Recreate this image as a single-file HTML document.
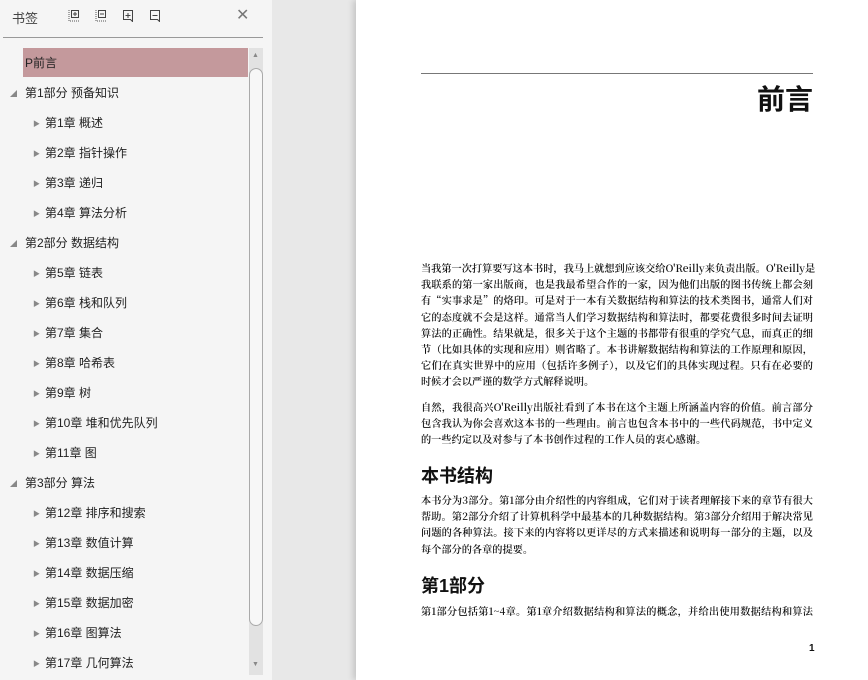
<!DOCTYPE html>
<html><head><meta charset="utf-8"><style>
*{margin:0;padding:0;box-sizing:border-box}
body{width:868px;height:680px;overflow:hidden;background:#e8e8e8;font-family:"Liberation Sans","Noto Sans CJK SC",sans-serif;position:relative}
#side{position:absolute;left:0;top:0;width:272px;height:680px;background:#f5f5f5}
.t{position:absolute;font-size:13px;color:#333}
.ic{position:absolute;top:9px;width:12px;height:13px}
.row{position:absolute;font-size:12px;color:#222;line-height:16px;white-space:nowrap}
.arr{position:absolute;font-size:7px;color:#888}
#page{position:absolute;left:356px;top:0;width:512px;height:680px;background:#fff;box-shadow:-3px 0 6px rgba(0,0,0,.15)}
.p{position:absolute;left:65px;width:392px;font-family:"Noto Serif CJK SC","Liberation Serif",serif;font-size:10.2px;font-weight:600;color:#111;line-height:16.2px;text-align:justify;text-align-last:justify;white-space:nowrap}
.l{display:block;height:16.2px;overflow:visible}
.h{position:absolute;left:65px;font-weight:bold;font-size:18px;color:#111}
</style></head><body>
<div id="side">
<div class="t" style="left:12px;top:8px;color:#444">书签</div>
<svg class="ic" style="left:68px" viewBox="0 0 12 13"><path d="M1 1v11h10" stroke="#555" stroke-dasharray="1 1" fill="none"/><rect x="3.5" y="1.5" width="7" height="7" fill="none" stroke="#444"/><path d="M7 3v4M5 5h4" stroke="#444"/></svg>
<svg class="ic" style="left:95px" viewBox="0 0 12 13"><path d="M1 1v11h10" stroke="#555" stroke-dasharray="1 1" fill="none"/><rect x="3.5" y="1.5" width="7" height="7" fill="none" stroke="#444"/><path d="M5 5h4" stroke="#444"/></svg>
<svg class="ic" style="left:122px" viewBox="0 0 12 13"><path d="M1.5 1.5h9v11l-2-2h-7z" fill="none" stroke="#444"/><path d="M6 4v5M3.5 6.5h5" stroke="#444"/></svg>
<svg class="ic" style="left:149px" viewBox="0 0 12 13"><path d="M1.5 1.5h9v11l-2-2h-7z" fill="none" stroke="#444"/><path d="M3.5 6.5h5" stroke="#444"/></svg>
<div class="t" style="left:236px;top:5px;font-size:16px;color:#777">✕</div>
<div style="position:absolute;left:3px;top:37px;width:260px;height:1px;background:#999"></div>
<div style="position:absolute;left:23px;top:48px;width:225px;height:29px;background:#c4999c"></div>
<div class="row" style="left:25px;top:55px">P前言</div>
<div style="position:absolute;left:249px;top:48px;width:14px;height:627px;background:#e2e2e2"></div>
<div style="position:absolute;left:249px;top:68px;width:14px;height:558px;background:#f7f7f7;border:1px solid #aaa;border-radius:7px"></div>
<div class="arr" style="left:252px;top:52px">▲</div>
<div class="arr" style="left:252px;top:661px">▼</div>
<div class="arr" style="left:10px;top:89px">◢</div><div class="row" style="left:25px;top:85px">第1部分 预备知识</div>
<div class="arr" style="left:33px;top:119px">▶</div><div class="row" style="left:45px;top:115px">第1章 概述</div>
<div class="arr" style="left:33px;top:149px">▶</div><div class="row" style="left:45px;top:145px">第2章 指针操作</div>
<div class="arr" style="left:33px;top:179px">▶</div><div class="row" style="left:45px;top:175px">第3章 递归</div>
<div class="arr" style="left:33px;top:209px">▶</div><div class="row" style="left:45px;top:205px">第4章 算法分析</div>
<div class="arr" style="left:10px;top:239px">◢</div><div class="row" style="left:25px;top:235px">第2部分 数据结构</div>
<div class="arr" style="left:33px;top:269px">▶</div><div class="row" style="left:45px;top:265px">第5章 链表</div>
<div class="arr" style="left:33px;top:299px">▶</div><div class="row" style="left:45px;top:295px">第6章 栈和队列</div>
<div class="arr" style="left:33px;top:329px">▶</div><div class="row" style="left:45px;top:325px">第7章 集合</div>
<div class="arr" style="left:33px;top:359px">▶</div><div class="row" style="left:45px;top:355px">第8章 哈希表</div>
<div class="arr" style="left:33px;top:389px">▶</div><div class="row" style="left:45px;top:385px">第9章 树</div>
<div class="arr" style="left:33px;top:419px">▶</div><div class="row" style="left:45px;top:415px">第10章 堆和优先队列</div>
<div class="arr" style="left:33px;top:449px">▶</div><div class="row" style="left:45px;top:445px">第11章 图</div>
<div class="arr" style="left:10px;top:479px">◢</div><div class="row" style="left:25px;top:475px">第3部分 算法</div>
<div class="arr" style="left:33px;top:509px">▶</div><div class="row" style="left:45px;top:505px">第12章 排序和搜索</div>
<div class="arr" style="left:33px;top:539px">▶</div><div class="row" style="left:45px;top:535px">第13章 数值计算</div>
<div class="arr" style="left:33px;top:569px">▶</div><div class="row" style="left:45px;top:565px">第14章 数据压缩</div>
<div class="arr" style="left:33px;top:599px">▶</div><div class="row" style="left:45px;top:595px">第15章 数据加密</div>
<div class="arr" style="left:33px;top:629px">▶</div><div class="row" style="left:45px;top:625px">第16章 图算法</div>
<div class="arr" style="left:33px;top:659px">▶</div><div class="row" style="left:45px;top:655px">第17章 几何算法</div>
</div>
<div id="page">
<div style="position:absolute;left:65px;top:73px;width:392px;height:1px;background:#777"></div>
<div style="position:absolute;right:55px;top:78px;font-size:28px;font-weight:bold;color:#111">前言</div>
<div class="p" style="top:260px">
<span class="l">当我第一次打算要写这本书时，我马上就想到应该交给O'Reilly来负责出版。O'Reilly是</span>
<span class="l">我联系的第一家出版商，也是我最希望合作的一家，因为他们出版的图书传统上都会刻</span>
<span class="l">有“实事求是”的烙印。可是对于一本有关数据结构和算法的技术类图书，通常人们对</span>
<span class="l">它的态度就不会是这样。通常当人们学习数据结构和算法时，都要花费很多时间去证明</span>
<span class="l">算法的正确性。结果就是，很多关于这个主题的书都带有很重的学究气息，而真正的细</span>
<span class="l">节（比如具体的实现和应用）则省略了。本书讲解数据结构和算法的工作原理和原因，</span>
<span class="l">它们在真实世界中的应用（包括许多例子），以及它们的具体实现过程。只有在必要的</span>
<span class="l" style="text-align-last:left">时候才会以严谨的数学方式解释说明。</span>
</div>
<div class="p" style="top:399px">
<span class="l">自然，我很高兴O'Reilly出版社看到了本书在这个主题上所涵盖内容的价值。前言部分</span>
<span class="l">包含我认为你会喜欢这本书的一些理由。前言也包含本书中的一些代码规范，书中定义</span>
<span class="l" style="text-align-last:left">的一些约定以及对参与了本书创作过程的工作人员的衷心感谢。</span>
</div>
<div class="h" style="top:462px">本书结构</div>
<div class="p" style="top:492px">
<span class="l">本书分为3部分。第1部分由介绍性的内容组成，它们对于读者理解接下来的章节有很大</span>
<span class="l">帮助。第2部分介绍了计算机科学中最基本的几种数据结构。第3部分介绍用于解决常见</span>
<span class="l">问题的各种算法。接下来的内容将以更详尽的方式来描述和说明每一部分的主题，以及</span>
<span class="l" style="text-align-last:left">每个部分的各章的提要。</span>
</div>
<div class="h" style="top:572px">第1部分</div>
<div class="p" style="top:603px">
<span class="l">第1部分包括第1~4章。第1章介绍数据结构和算法的概念，并给出使用数据结构和算法</span>
</div>
<div style="position:absolute;left:453px;top:643px;font-size:10px;font-weight:bold;color:#111">1</div>
</div>
</body></html>
